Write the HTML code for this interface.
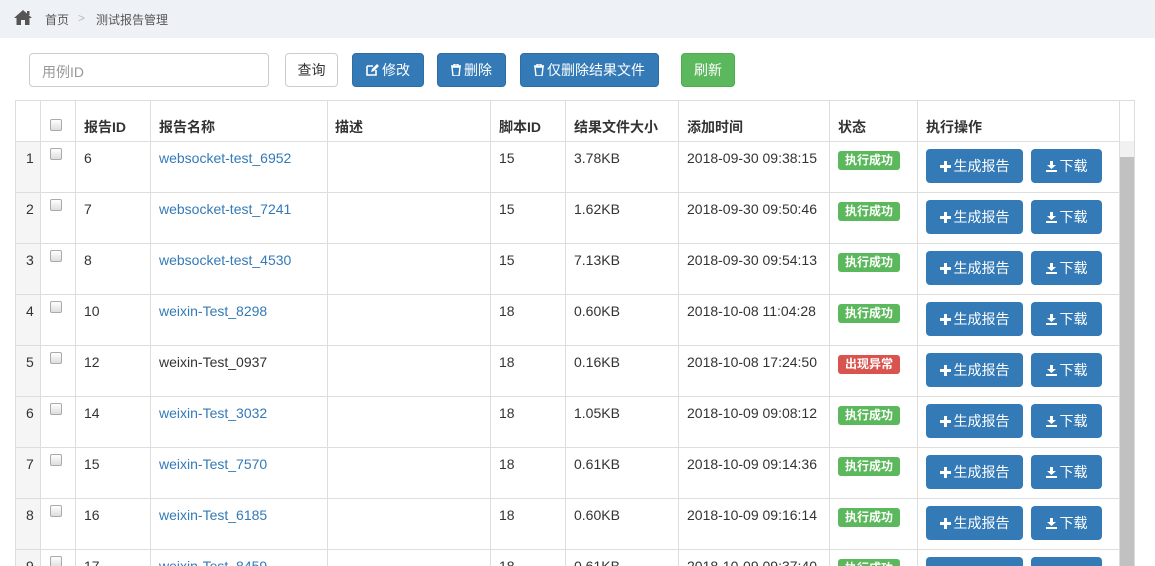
<!DOCTYPE html>
<html><head><meta charset="utf-8"><style>
*{box-sizing:border-box;margin:0;padding:0}
body{width:1155px;height:566px;overflow:hidden;background:#fff;font-family:"Liberation Sans","Noto Sans CJK SC",sans-serif;font-size:14px;color:#333;position:relative}
.top{position:absolute;left:0;top:0;width:1155px;height:38px;background:#eef1f6}
.bc{position:absolute;top:11px;font-size:12px;color:#555}
.inp{position:absolute;left:29px;top:53px;width:240px;height:34px;border:1px solid #ccc;border-radius:4px;color:#999;padding:8px 12px;font-size:14px}
.btn{position:absolute;top:53px;height:34px;border-radius:4px;color:#fff;font-size:14px;text-align:center;line-height:32px}
.blue{background:#337ab7;border:1px solid #2e6da4}
.tbl{position:absolute;left:15px;top:100px;width:1120px;height:466px;border:1px solid #ddd;border-bottom:none;overflow:hidden}
.vl{position:absolute;top:0;width:1px;height:466px;background:#ddd}
.hl{position:absolute;left:0;height:1px;width:1104px;background:#ddd}
.c{position:absolute;white-space:nowrap}
.h{font-weight:bold;top:16px}
a{color:#337ab7;text-decoration:none}
.cb{position:absolute;width:12px;height:12px;border:1px solid #aaa;border-radius:2px;background:linear-gradient(#fff,#ddd)}
.lab{position:absolute;height:19px;line-height:19px;width:62px;text-align:center;border-radius:3px;color:#fff;font-size:12px;font-weight:bold}
.ab{position:absolute;height:34px;line-height:34px;border-radius:4px;background:#337ab7;color:#fff;text-align:center;font-size:14px}
svg.i{vertical-align:-1px;margin-right:3px}
</style></head><body>
<div class="top"></div>
<svg style="position:absolute;left:14px;top:10px" width="18" height="15" viewBox="0 0 18 15"><path d="M9 0L0 8h2.5v7h4.5v-5h4v5h4.5V8H18z" fill="#555"/><rect x="13" y="1" width="2.5" height="4" fill="#555"/></svg>
<div class="bc" style="left:45px">首页</div>
<div class="bc" style="left:78px;color:#bbb">&gt;</div>
<div class="bc" style="left:96px">测试报告管理</div>

<div class="inp">用例ID</div>
<div class="btn" style="left:285px;width:53px;border:1px solid #ccc;color:#333;background:#fff">查询</div>
<div class="btn blue" style="left:352px;width:72px"><svg class="i" width="13" height="12" viewBox="0 0 13 12"><path d="M1 2h6M1 2v9h9V6" stroke="#fff" stroke-width="1.6" fill="none"/><path d="M5 8l1-3 5-5 2 2-5 5z" fill="#fff"/></svg>修改</div>
<div class="btn blue" style="left:437px;width:69px"><svg class="i" width="10" height="12" viewBox="0 0 10 12"><path d="M0 2h10M3 2V0h4v2M1 3h8l-1 9H2z" stroke="#fff" fill="none" stroke-width="1.4"/></svg>删除</div>
<div class="btn blue" style="left:520px;width:139px"><svg class="i" width="10" height="12" viewBox="0 0 10 12"><path d="M0 2h10M3 2V0h4v2M1 3h8l-1 9H2z" stroke="#fff" fill="none" stroke-width="1.4"/></svg>仅删除结果文件</div>
<div class="btn" style="left:681px;width:54px;background:#5cb85c;border:1px solid #4cae4c">刷新</div>

<div class="tbl">
<div style="position:absolute;left:0;top:40px;width:24px;height:430px;background:#f5f5f5"></div>
<div style="position:absolute;left:1103px;top:40px;width:16px;height:430px;background:#f1f1f1"></div>
<div style="position:absolute;left:1104px;top:56px;width:14px;height:420px;background:#c1c1c1"></div>
<div id="g"></div>
</div>
<script>
var g=document.getElementById('g'),h='';
var xs=[24,59,134,311,474,549,662,813,901,1103];
xs.forEach(function(x){h+='<div class="vl" style="left:'+x+'px"></div>'});
var hd=[[68,'报告ID'],[143,'报告名称'],[319,'描述'],[483,'脚本ID'],[558,'结果文件大小'],[671,'添加时间'],[822,'状态'],[910,'执行操作']];
hd.forEach(function(a){h+='<div class="c h" style="left:'+a[0]+'px">'+a[1]+'</div>'});
h+='<div class="cb" style="left:34px;top:18px"></div>';
var rows=[[6,'websocket-test_6952',15,'3.78KB','2018-09-30 09:38:15',1],[7,'websocket-test_7241',15,'1.62KB','2018-09-30 09:50:46',1],[8,'websocket-test_4530',15,'7.13KB','2018-09-30 09:54:13',1],[10,'weixin-Test_8298',18,'0.60KB','2018-10-08 11:04:28',1],[12,'weixin-Test_0937',18,'0.16KB','2018-10-08 17:24:50',0],[14,'weixin-Test_3032',18,'1.05KB','2018-10-09 09:08:12',1],[15,'weixin-Test_7570',18,'0.61KB','2018-10-09 09:14:36',1],[16,'weixin-Test_6185',18,'0.60KB','2018-10-09 09:16:14',1],[17,'weixin-Test_8459',18,'0.61KB','2018-10-09 09:37:40',1]];
var plus='<svg class="i" width="11" height="11" viewBox="0 0 11 11"><path d="M4 0h3v4h4v3H7v4H4V7H0V4h4z" fill="#fff"/></svg>';
var dl='<svg class="i" width="11" height="11" viewBox="0 0 11 11"><path d="M4 0h3v4h3L5.5 8 1 4h3z" fill="#fff"/><rect x="0" y="9" width="11" height="2" fill="#fff"/></svg>';
rows.forEach(function(r,i){var t=40+51*i;
h+='<div class="hl" style="top:'+t+'px"></div>';
var y=t+9;
h+='<div class="c" style="left:10px;top:'+y+'px">'+(i+1)+'</div>';
h+='<div class="cb" style="left:34px;top:'+(t+7)+'px"></div>';
h+='<div class="c" style="left:68px;top:'+y+'px">'+r[0]+'</div>';
h+='<div class="c" style="left:143px;top:'+y+'px">'+(r[5]?'<a>'+r[1]+'</a>':r[1])+'</div>';
h+='<div class="c" style="left:483px;top:'+y+'px">'+r[2]+'</div>';
h+='<div class="c" style="left:558px;top:'+y+'px">'+r[3]+'</div>';
h+='<div class="c" style="left:671px;top:'+y+'px">'+r[4]+'</div>';
h+='<div class="lab" style="left:822px;top:'+(t+10)+'px;background:'+(r[5]?'#5cb85c':'#d9534f')+'">'+(r[5]?'执行成功':'出现异常')+'</div>';
h+='<div class="ab" style="left:910px;top:'+(t+8)+'px;width:97px">'+plus+'生成报告</div>';
h+='<div class="ab" style="left:1015px;top:'+(t+8)+'px;width:71px">'+dl+'下载</div>';
});
g.innerHTML=h;
</script>
</body></html>
